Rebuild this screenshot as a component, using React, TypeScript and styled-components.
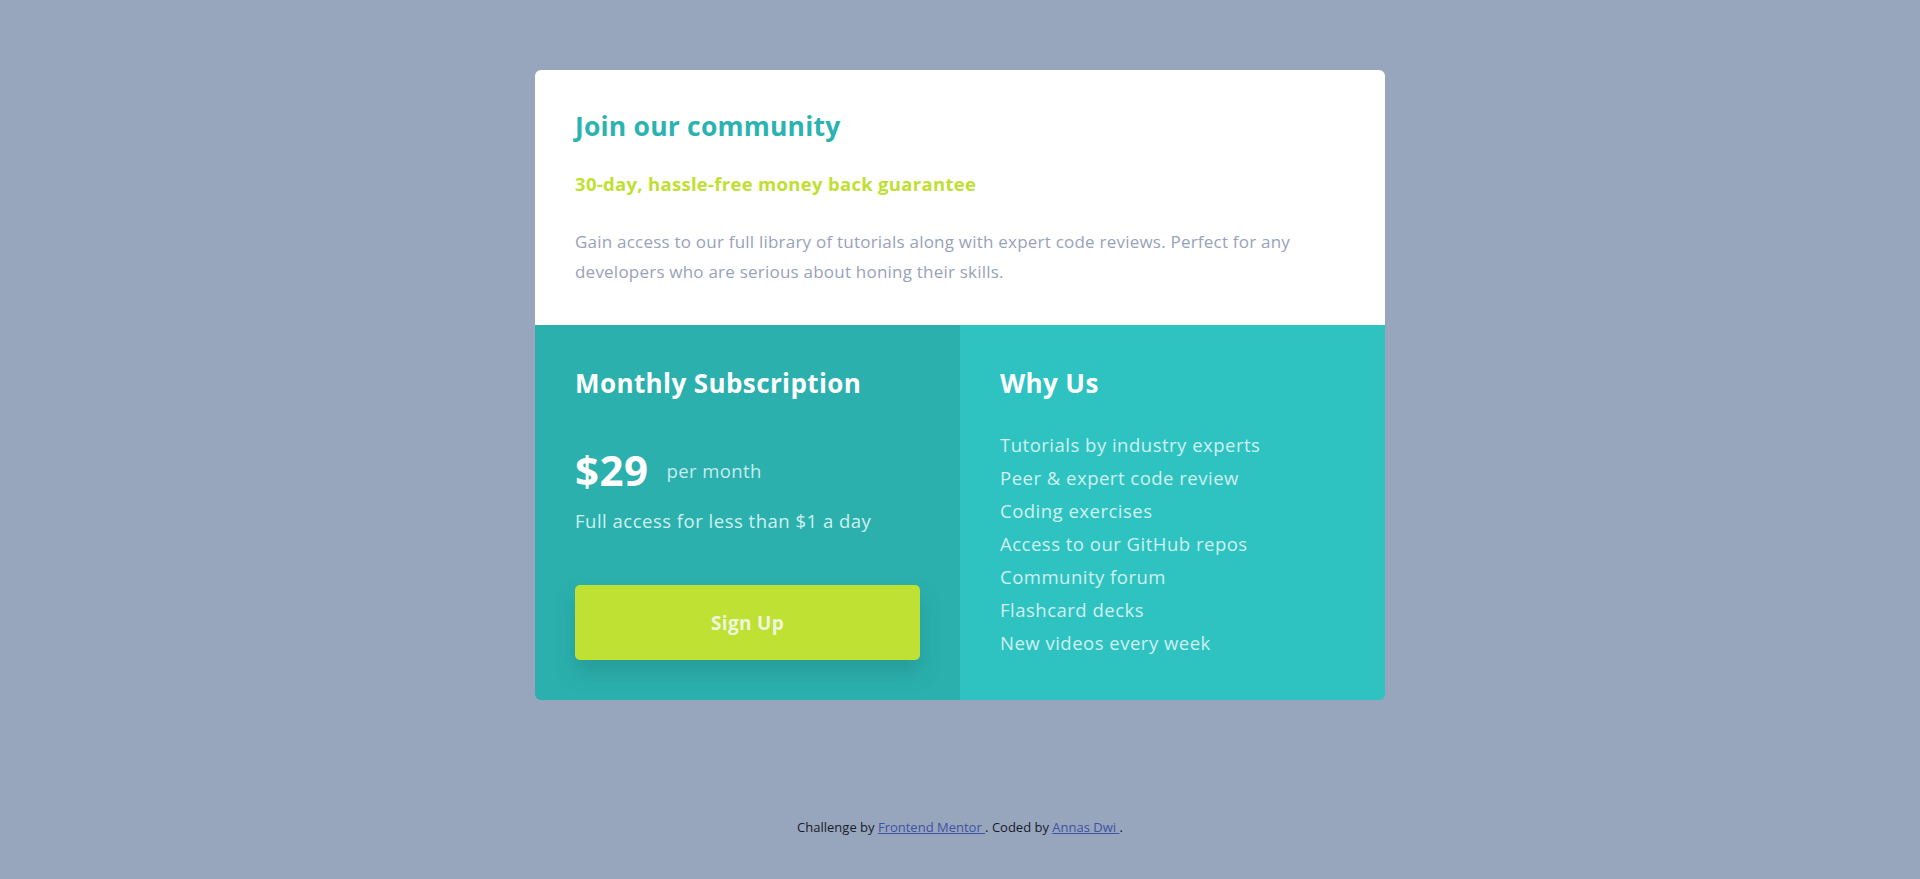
import React from 'react';
import styled, { createGlobalStyle } from 'styled-components';

const GlobalStyle = createGlobalStyle`
  * {
    box-sizing: border-box;
  }
  body {
    margin: 0;
    background-color: #97a6bd;
    font-family: "Open Sans", "Liberation Sans", sans-serif;
  }
`;

const Page = styled.main`
  display: flex;
  flex-direction: column;
  align-items: center;
  min-height: 879px;
  padding-top: 70px;
`;

const Card = styled.section`
  display: grid;
  grid-template-columns: 1fr 1fr;
  width: 850px;
  border-radius: 6px;
  overflow: hidden;
`;

const Intro = styled.div`
  grid-column: 1 / -1;
  padding: 40px 40px 38px;
  background-color: #ffffff;
`;

const Title = styled.h1`
  margin: 0 0 30px;
  font-size: 26.5px;
  line-height: 32px;
  letter-spacing: 0.2px;
  font-weight: 700;
  color: #2bb3b1;
`;

const Guarantee = styled.h3`
  margin: 0 0 31px;
  font-size: 18.5px;
  line-height: 24px;
  letter-spacing: 0.3px;
  font-weight: 700;
  color: #bfdf32;
`;

const Lead = styled.p`
  margin: 0;
  font-size: 17px;
  line-height: 30px;
  letter-spacing: 0.22px;
  color: #98a2ba;
`;

const Panel = styled.div<{ $tone: string }>`
  display: flex;
  flex-direction: column;
  padding: 40px;
  background-color: ${(p) => p.$tone};
  color: #ffffff;
`;

const PanelTitle = styled.h2`
  margin: 0;
  font-size: 26px;
  line-height: 36px;
  letter-spacing: 0.4px;
  font-weight: 700;
`;

const PriceRow = styled.div`
  display: flex;
  align-items: center;
  gap: 18px;
  margin-top: 45px;
`;

const Price = styled.span`
  font-size: 42px;
  line-height: 48px;
  letter-spacing: 0.5px;
  font-weight: 700;
`;

const Period = styled.span`
  font-size: 18.5px;
  letter-spacing: 0.4px;
  color: #c6ecec;
`;

const Note = styled.p`
  margin: 14px 0 0;
  font-size: 18.5px;
  line-height: 26px;
  letter-spacing: 0.5px;
  color: #d0f0ef;
`;

const SignUp = styled.button`
  margin-top: 51px;
  width: 345px;
  height: 75px;
  border: none;
  border-radius: 5px;
  background-color: #bfe134;
  box-shadow: 0 12px 20px rgba(36, 130, 128, 0.45);
  color: #eef6dc;
  font-family: inherit;
  font-size: 19px;
  letter-spacing: 0.3px;
  font-weight: 700;
  cursor: pointer;
`;

const Perks = styled.ul`
  display: flex;
  flex-direction: column;
  gap: 6px;
  margin: 30px 0 0;
  padding: 0;
  list-style: none;
`;

const Perk = styled.li`
  font-size: 18.5px;
  line-height: 27px;
  letter-spacing: 0.5px;
  color: #d0f0ef;
`;

const Footer = styled.footer`
  margin-top: 118px;
  font-size: 13px;
  color: #1a1a2a;

  a {
    color: #3e52a3;
  }
`;

const perks = [
  'Tutorials by industry experts',
  'Peer & expert code review',
  'Coding exercises',
  'Access to our GitHub repos',
  'Community forum',
  'Flashcard decks',
  'New videos every week',
];

const App: React.FC = () => {
  return (
    <>
      <GlobalStyle />
      <Page>
        <Card>
          <Intro>
            <Title>Join our community</Title>
            <Guarantee>30-day, hassle-free money back guarantee</Guarantee>
            <Lead>
              Gain access to our full library of tutorials along with expert code reviews. Perfect for any
              developers who are serious about honing their skills.
            </Lead>
          </Intro>
          <Panel $tone="#2bb0ae">
            <PanelTitle>Monthly Subscription</PanelTitle>
            <PriceRow>
              <Price>$29</Price>
              <Period>per month</Period>
            </PriceRow>
            <Note>Full access for less than $1 a day</Note>
            <SignUp>Sign Up</SignUp>
          </Panel>
          <Panel $tone="#2ec3c1">
            <PanelTitle>Why Us</PanelTitle>
            <Perks>
              {perks.map((perk) => (
                <Perk key={perk}>{perk}</Perk>
              ))}
            </Perks>
          </Panel>
        </Card>
        <Footer>
          Challenge by <a href="#">Frontend Mentor </a>. Coded by <a href="#">Annas Dwi </a>.
        </Footer>
      </Page>
    </>
  );
};

export default App;
